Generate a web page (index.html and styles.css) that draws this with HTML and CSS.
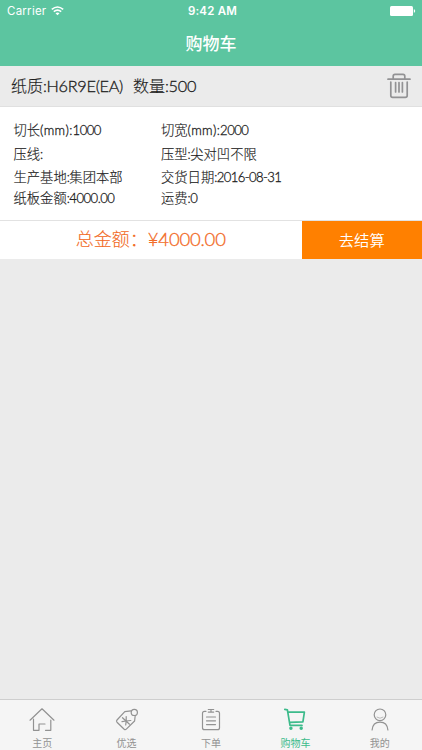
FILE: index.html
```html
<!DOCTYPE html>
<html lang="zh-CN">
<head>
<meta charset="utf-8">
<title>购物车</title>
<link rel="stylesheet" href="styles.css">
</head>
<body>
<div class="app">
  <header class="top">
    <div class="status">
      <div class="carrier"><span>Carrier</span>
        <svg width="13" height="10" viewBox="0 0 13 10" fill="none" stroke="#fff" stroke-width="1.6"><path d="M.8 3.4Q6.5-1.4 12.2 3.4M2.8 5.6Q6.5 2.5 10.2 5.6"/><path d="M4.5 7.3Q6.5 5.7 8.5 7.3L6.5 9.3z" fill="#fff" stroke="none"/></svg>
      </div>
      <div class="clock">9:42 AM</div>
      <svg class="battery" width="26" height="10" viewBox="0 0 26 10" fill="#fff"><rect width="23" height="10" rx="1.5"/><path d="M23.8 3.2q1.4.3 1.4 1.8t-1.4 1.8z"/></svg>
    </div>
    <h1>购物车</h1>
  </header>
  <section class="item-head">
    <div class="paper">纸质<span class="l">:H6R9E(EA)</span></div>
    <div class="qty">数量<span class="l">:500</span></div>
    <svg class="trash" width="24" height="26" viewBox="0 0 24 26" fill="none" stroke="#929294" stroke-width="1.7" stroke-linecap="round" stroke-linejoin="round"><path d="M1 6.2H23M6.2 6V3.2Q6.2 1.4 8 1.4H16Q17.8 1.4 17.8 3.2V6M3.8 9V22.5Q3.8 24.4 5.7 24.4H18.3Q20.2 24.4 20.2 22.5V9M8.6 9.5V19M12 9.5V19M15.4 9.5V19"/></svg>
  </section>
  <section class="details">
    <div>切长<span class="l unit">(mm):</span><span class="l">1000</span></div><div>切宽<span class="l unit">(mm):</span><span class="l">2000</span></div>
    <div>压线<span class="l">:</span></div><div>压型<span class="l">:</span>尖对凹不限</div>
    <div>生产基地<span class="l">:</span>集团本部</div><div>交货日期<span class="l date">:2016-08-31</span></div>
    <div>纸板金额<span class="l">:4000.00</span></div><div>运费<span class="l">:0</span></div>
  </section>
  <section class="checkout">
    <div class="total">总金额：<span class="l">¥4000.00</span></div>
    <button class="pay">去结算</button>
  </section>
  <main class="space"></main>
  <nav class="tabs">
    <a class="tab"><svg width="26" height="26" viewBox="0 0 26 26"><path d="M1 13.2L13 1.8L25 13.2M4.5 12V23.3H10V17H16M16.5 23.3H21.8V13"/></svg><span>主页</span></a>
    <a class="tab"><svg width="26" height="26" viewBox="0 0 26 26"><path d="M17 3.8L10.8 4.6L3 13Q2 14.1 3 15.2L10.2 22.3Q11.3 23.2 12.3 22.2L20.6 14L21.2 8.8"/><circle cx="20.3" cy="5.4" r="3.1"/><path d="M8.5 10.7L15.5 17.2M12.2 9.6V14L16.8 13.5M12.2 14L8 14.7M12.2 14L11.7 18"/></svg><span>优选</span></a>
    <a class="tab"><svg width="26" height="26" viewBox="0 0 26 26"><path d="M8 4.3H6.5Q4.5 4.3 4.5 6.3V20.7Q4.5 22.7 6.5 22.7H19.5Q21.5 22.7 21.5 20.7V6.3Q21.5 4.3 19.5 4.3H18M10.3 2.5H15.7M13 2.6V5M10.3 5.1H15.7M8.5 10H17.5M8.5 13.8H17.5M8.5 17.6H17.5"/></svg><span>下单</span></a>
    <a class="tab active"><svg width="26" height="26" viewBox="0 0 26 26"><path d="M2.8 2.3L5.4 2.8L8 18.4H20M6 5.2H22.4L20.9 14.8L7.8 15.4"/><circle cx="8.9" cy="21.3" r=".9" fill="currentColor"/><circle cx="19.2" cy="21.3" r=".9" fill="currentColor"/></svg><span>购物车</span></a>
    <a class="tab"><svg width="26" height="26" viewBox="0 0 26 26"><circle cx="13" cy="7.8" r="5.8"/><path d="M5.1 23Q5.8 15.2 13 15.2T20.9 23"/><path class="fine" d="M10 10.2Q13 12.5 16 10.2"/></svg><span>我的</span></a>
  </nav>
</div>
</body>
</html>
```
FILE: styles.css
```css
* { box-sizing: border-box; }
body { margin: 0; font-family: "Noto Sans CJK SC", sans-serif; font-weight: 300; color: #1c1c1c; }
.app { width: 422px; height: 750px; display: flex; flex-direction: column; background: #ebebeb; overflow: hidden; }
.l { font-family: Lato, sans-serif; font-weight: 300; -webkit-text-stroke: .3px currentColor; }
.top { height: 66px; flex: none; background: #5cc5a0; color: #fff; }
.status { height: 22px; padding: 0 6px 0 7px; display: grid; grid-template-columns: 1fr auto 1fr; align-items: center; font-family: Inter, sans-serif; font-size: 11.5px; font-weight: 400; }
.carrier { display: flex; align-items: center; gap: 5px; letter-spacing: .25px; }
.clock { font-weight: 600; letter-spacing: .2px; padding-left: 2px; }
.battery { justify-self: end; }
h1 { margin: 0; height: 42px; line-height: 41px; text-align: center; font-size: 17px; font-weight: 500; }
.item-head { height: 41px; flex: none; display: flex; align-items: center; padding: 0 11px 2px; font-size: 16px; border-bottom: 1px solid #e0e0e0; }
.item-head, .details, .total { -webkit-text-stroke: .15px currentColor; }
.paper { width: 122px; white-space: nowrap; }
.trash { margin: 2px 0 0 auto; }
.item-head .l { font-size: 16.3px; letter-spacing: -.3px; }
.details { height: 113px; flex: none; background: #fff; display: grid; grid-template-columns: 147.5px 1fr; grid-template-rows: 24px 23px 21px 20px; padding: 11px 13.5px; font-size: 13.3px; line-height: 23px; white-space: nowrap; }
.details .l { font-size: 13.1px; letter-spacing: -.5px; }
.details .unit { letter-spacing: .3px; }
.details .date { letter-spacing: -.6px; }
.checkout { height: 39px; flex: none; display: flex; background: #fff; border-top: 1px solid #e2e2e2; }
.total { flex: 1; text-align: center; line-height: 35px; font-size: 18px; color: #f26a25; }
.total .l { font-size: 18.5px; letter-spacing: -.2px; }
.pay { width: 120.5px; border: 0; padding: 0 0 3px; background: #ff8000; color: #fff; font: 350 15.3px "Noto Sans CJK SC", sans-serif; }
.space { flex: 1; }
.tabs { height: 51px; flex: none; display: grid; grid-template-columns: repeat(5, 1fr); background: #f5f5f5; border-top: 1px solid #cecece; }
.tab { display: flex; flex-direction: column; align-items: center; padding-top: 7px; color: #929292; font-size: 10px; line-height: 19px; font-weight: 400; }
.tab svg { flex: none; fill: none; stroke: currentColor; stroke-width: 1.2; stroke-linecap: round; stroke-linejoin: round; }
.tab .fine { stroke-width: .6; }
.tab.active { color: #3cbb8b; }
.tab.active svg { stroke-width: 1.7; }
```
